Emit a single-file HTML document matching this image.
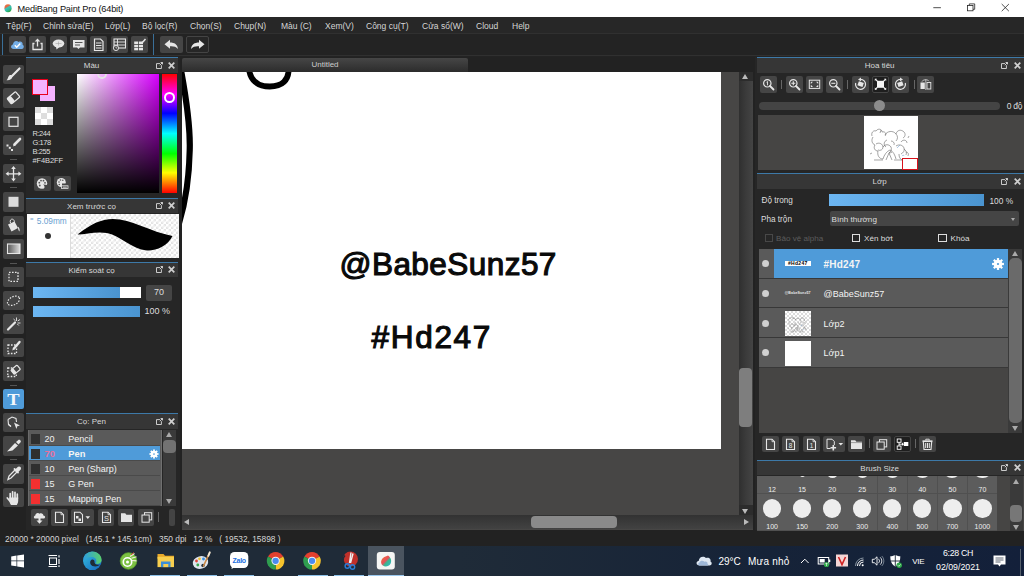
<!DOCTYPE html><html><head><meta charset="utf-8"><title>MediBang Paint Pro</title><style>
*{box-sizing:border-box;margin:0;padding:0}
html,body{width:1024px;height:576px;overflow:hidden;background:#222;}
body{position:relative;font-family:"Liberation Sans",sans-serif;font-size:8.5px;color:#ddd;line-height:1;}
.a{position:absolute;}
.t{position:absolute;white-space:nowrap;}
.btn{position:absolute;background:#454545;border-radius:2px;}
.hdr{position:absolute;background:#363636;border-top:1px solid #3d79a8;height:16px;}
.hdr .ti{position:absolute;left:0;right:0;top:4px;text-align:center;color:#d8d8d8;font-size:8px;}
svg{position:absolute;overflow:visible;}
</style></head><body>
<div class="a" style="left:0;top:0;width:1024px;height:17px;background:#fff"></div>
<svg style="left:3.500px;top:3.500px" width="8" height="8.500" viewBox="0 0 8 8.500"><defs><linearGradient id="tg" x1="0.150" y1="0" x2="0.700" y2="1"><stop offset="0" stop-color="#f07a3a"/><stop offset="0.300" stop-color="#e0684a"/><stop offset="0.450" stop-color="#3cc4b8"/><stop offset="0.700" stop-color="#2fb89a"/><stop offset="1" stop-color="#2a9e30"/></linearGradient></defs><ellipse cx="4" cy="4.300" rx="3.600" ry="4" fill="url(#tg)"/></svg>
<div class="t" style="left:17.600px;top:4.500px;font-size:9.200px;letter-spacing:-0.180px;color:#111;">MediBang Paint Pro (64bit)</div>
<svg style="left:0;top:0" width="1024" height="17" viewBox="0 0 1024 17" fill="none" stroke="#222" stroke-width="0.800"><path d="M933.300 7.700h7.600"/><rect x="967.600" y="5.400" width="5.400" height="5.400"/><path d="M969.300 5.400v-1.500h5.400v5.400h-1.700"/><path d="M1001.700 4l7.200 7.200M1008.900 4l-7.200 7.200"/></svg>
<div class="a" style="left:0;top:17px;width:1024px;height:16px;background:#272727"></div>
<div class="t" style="left:6px;top:21.500px;font-size:8.500px;color:#d6d6d6">Tệp(F)</div>
<div class="t" style="left:43px;top:21.500px;font-size:8.500px;color:#d6d6d6">Chỉnh sửa(E)</div>
<div class="t" style="left:105px;top:21.500px;font-size:8.500px;color:#d6d6d6">Lớp(L)</div>
<div class="t" style="left:142px;top:21.500px;font-size:8.500px;color:#d6d6d6">Bộ lọc(R)</div>
<div class="t" style="left:190px;top:21.500px;font-size:8.500px;color:#d6d6d6">Chọn(S)</div>
<div class="t" style="left:234px;top:21.500px;font-size:8.500px;color:#d6d6d6">Chụp(N)</div>
<div class="t" style="left:281px;top:21.500px;font-size:8.500px;color:#d6d6d6">Màu (C)</div>
<div class="t" style="left:325px;top:21.500px;font-size:8.500px;color:#d6d6d6">Xem(V)</div>
<div class="t" style="left:366px;top:21.500px;font-size:8.500px;color:#d6d6d6">Công cụ(T)</div>
<div class="t" style="left:422px;top:21.500px;font-size:8.500px;color:#d6d6d6">Cửa sổ(W)</div>
<div class="t" style="left:476px;top:21.500px;font-size:8.500px;color:#d6d6d6">Cloud</div>
<div class="t" style="left:512px;top:21.500px;font-size:8.500px;color:#d6d6d6">Help</div>
<div class="a" style="left:0;top:33px;width:1024px;height:24px;background:#232323;border-top:1px solid #303030"></div>
<div class="a" style="left:2px;top:34px;width:1px;height:21px;background:#3a6f98"></div>
<div class="a" style="left:153px;top:34px;width:1px;height:21px;background:#3a6f98"></div>
<div class="btn" style="left:9.0px;top:36px;width:17px;height:16.5px"></div>
<svg style="left:9.0px;top:36px" width="17" height="17" viewBox="0 0 17 17" ><path d="M4.500 13C1.500 13 1.200 9.200 4 8.600C3.800 5.500 7.500 3.600 9.600 6C11.800 4.600 14.200 6.500 13.600 8.800C15.600 9.500 15 13 12.800 13Z" fill="#74aee6"/><path d="M5.800 9.300l1.900 1.900l3.600-3.800" fill="none" stroke="#fff" stroke-width="1.400"/></svg>
<div class="btn" style="left:29.3px;top:36px;width:17px;height:16.5px"></div>
<svg style="left:29.3px;top:36px" width="17" height="17" viewBox="0 0 17 17" ><path d="M5.500 7.500H4v6h9v-6h-1.500" fill="none" stroke="#e6e6e6" stroke-width="1.300"/><path d="M8.500 10.500V4" stroke="#e6e6e6" stroke-width="1.300"/><path d="M8.500 2.500l2.800 3h-5.600z" fill="#e6e6e6"/></svg>
<div class="btn" style="left:49.6px;top:36px;width:17px;height:16.5px"></div>
<svg style="left:49.6px;top:36px" width="17" height="17" viewBox="0 0 17 17" ><ellipse cx="8.500" cy="7.500" rx="5.800" ry="4" fill="#e6e6e6"/><path d="M6 10.500l.5 3 3-2.500z" fill="#e6e6e6"/><path d="M5.500 7.500h6M8.500 5.500v4" stroke="#999" stroke-width="0.500"/></svg>
<div class="btn" style="left:69.9px;top:36px;width:17px;height:16.5px"></div>
<svg style="left:69.9px;top:36px" width="17" height="17" viewBox="0 0 17 17" ><path d="M3 4h11.500v7.500H10L8.500 13L7 11.500H3Z" fill="#e6e6e6"/><path d="M5 6.500h7.500M5 9h5" stroke="#555" stroke-width="1"/></svg>
<div class="btn" style="left:90.2px;top:36px;width:17px;height:16.5px"></div>
<svg style="left:90.2px;top:36px" width="17" height="17" viewBox="0 0 17 17" ><path d="M4.500 3h6l2.500 2.500v9h-8.500z" fill="none" stroke="#e6e6e6" stroke-width="1.200"/><path d="M6 7h5.500M6 9.500h5.500M6 12h5.500" stroke="#e6e6e6" stroke-width="1.100"/></svg>
<div class="btn" style="left:110.5px;top:36px;width:17px;height:16.5px"></div>
<svg style="left:110.5px;top:36px" width="17" height="17" viewBox="0 0 17 17" ><rect x="3" y="3" width="11.500" height="9" fill="none" stroke="#e6e6e6" stroke-width="1.100"/><path d="M3 6h11.500M3 9h11.500M6.500 3v9" stroke="#e6e6e6" stroke-width="0.900"/><circle cx="5" cy="12" r="2.600" fill="#454545" stroke="#e6e6e6" stroke-width="0.900"/><path d="M5 10.500V12h1.200" stroke="#e6e6e6" stroke-width="0.700" fill="none"/></svg>
<div class="btn" style="left:130.8px;top:36px;width:17px;height:16.5px"></div>
<svg style="left:130.8px;top:36px" width="17" height="17" viewBox="0 0 17 17" ><rect x="3.200" y="5.500" width="4" height="2.500" fill="#e6e6e6"/><rect x="8" y="5.500" width="4" height="2.500" fill="#e6e6e6"/><rect x="3.200" y="8.800" width="4" height="2.500" fill="#e6e6e6"/><rect x="8" y="8.800" width="4" height="2.500" fill="#e6e6e6"/><rect x="3.200" y="12" width="4" height="2.300" fill="#e6e6e6"/><rect x="8" y="12" width="4" height="2.300" fill="#e6e6e6"/><path d="M14.500 3L10.500 7.500" stroke="#e6e6e6" stroke-width="1.500"/></svg>
<div class="btn" style="left:160px;top:36px;width:23px;height:17px"></div>
<svg style="left:160px;top:36px" width="23" height="17" viewBox="0 0 23 17" ><path d="M4.500 8.200L10 3.800V6.500C14.500 6.500 17.500 8.500 18 13C16 10.500 13.500 10 10 10.200V12.800Z" fill="#e6e6e6"/></svg>
<div class="btn" style="left:186px;top:36px;width:23px;height:17px;background:#262626;border:1px solid #444"></div>
<svg style="left:186px;top:36px" width="23" height="17" viewBox="0 0 23 17" ><path d="M18.500 8.200L13 3.800V6.500C8.500 6.500 5.500 8.500 5 13C7 10.500 9.500 10 13 10.200V12.800Z" fill="#e6e6e6"/></svg>
<div class="a" style="left:0;top:55px;width:1024px;height:1px;background:#303030"></div>
<div class="a" style="left:0;top:57px;width:26px;height:473px;background:#222"></div>
<div class="btn" style="left:3px;top:64.5px;width:20.500px;height:19.500px;background:#454545"></div>
<svg style="left:3px;top:64.5px" width="21" height="19.5" viewBox="0 0 21 19.5" ><path d="M16.5 3.5L9 11" stroke="#e6e6e6" stroke-width="2.2" stroke-linecap="round" fill="none"/><path d="M9.5 11.5C9 14.5 6.500 15.500 3.500 15.200C5 14 4.800 12 6.500 10.200C7.500 9.500 9 10.200 9.500 11.500Z" fill="#e6e6e6"/></svg>
<div class="btn" style="left:3px;top:88px;width:20.500px;height:19.500px;background:#454545"></div>
<svg style="left:3px;top:88px" width="21" height="19.5" viewBox="0 0 21 19.5" ><g transform="rotate(-40 10.5 9.8)"><rect x="5" y="6.300" width="11" height="7" rx="1" fill="none" stroke="#e6e6e6" stroke-width="1.300"/><rect x="5" y="6.300" width="4.500" height="7" rx="1" fill="#e6e6e6"/></g></svg>
<div class="btn" style="left:3px;top:111.5px;width:20.500px;height:19.500px;background:#454545"></div>
<svg style="left:3px;top:111.5px" width="21" height="19.5" viewBox="0 0 21 19.5" ><rect x="6" y="5.300" width="9" height="9" fill="none" stroke="#e6e6e6" stroke-width="1.200"/></svg>
<div class="btn" style="left:3px;top:135px;width:20.500px;height:19.500px;background:#454545"></div>
<svg style="left:3px;top:135px" width="21" height="19.5" viewBox="0 0 21 19.5" ><path d="M17 4L11.500 9.500" stroke="#e6e6e6" stroke-width="2.600" stroke-linecap="round"/><path d="M11.300 8.300l1.800 1.800-3 1.300z" fill="#e6e6e6"/><rect x="3.500" y="9.500" width="2" height="2" fill="#e6e6e6"/><rect x="5.800" y="11.800" width="2" height="2" fill="#e6e6e6"/><rect x="8" y="14" width="2" height="2" fill="#e6e6e6"/></svg>
<div class="btn" style="left:3px;top:163.5px;width:20.500px;height:19.500px;background:#454545"></div>
<svg style="left:3px;top:163.5px" width="21" height="19.5" viewBox="0 0 21 19.5" ><path d="M10.500 3.500V16M4 9.800H17" stroke="#e6e6e6" stroke-width="1.300" fill="none"/><path d="M10.500 2l2.300 3h-4.600zM10.500 17.600l2.300-3h-4.600zM2.600 9.800l3-2.300v4.600zM18.400 9.800l-3-2.300v4.600z" fill="#e6e6e6"/></svg>
<div class="btn" style="left:3px;top:192px;width:20.500px;height:19.500px;background:#454545"></div>
<svg style="left:3px;top:192px" width="21" height="19.5" viewBox="0 0 21 19.5" ><rect x="5.500" y="4.800" width="10" height="10" fill="#dcdcdc"/></svg>
<div class="btn" style="left:3px;top:215.5px;width:20.500px;height:19.500px;background:#454545"></div>
<svg style="left:3px;top:215.5px" width="21" height="19.5" viewBox="0 0 21 19.5" ><path d="M5 8.500L11.500 5.500L15 12L8.500 15.500Z" fill="#e6e6e6"/><path d="M7.500 7C6.500 4.500 8 2.800 9.500 3.200C11 3.600 11.500 5 11.300 6.500" fill="none" stroke="#e6e6e6" stroke-width="1"/><path d="M14.800 10.500C16.500 11.500 17 13.500 16.500 15.500C15.500 15 15 13 14.800 10.500Z" fill="#e6e6e6"/></svg>
<div class="btn" style="left:3px;top:239px;width:20.500px;height:19.500px;background:#454545"></div>
<svg style="left:3px;top:239px" width="21" height="19.5" viewBox="0 0 21 19.5" ><defs><linearGradient id="gg" x1="0" y1="0" x2="1" y2="0"><stop offset="0" stop-color="#555"/><stop offset="1" stop-color="#ddd"/></linearGradient></defs><rect x="4.500" y="5" width="12.500" height="9.500" fill="url(#gg)" stroke="#e6e6e6" stroke-width="1.100"/></svg>
<div class="btn" style="left:3px;top:267px;width:20.500px;height:19.500px;background:#454545"></div>
<svg style="left:3px;top:267px" width="21" height="19.5" viewBox="0 0 21 19.5" ><rect x="6" y="5.300" width="9" height="9" fill="none" stroke="#e6e6e6" stroke-width="1.300" stroke-dasharray="1.600 1.400"/></svg>
<div class="btn" style="left:3px;top:290.5px;width:20.500px;height:19.500px;background:#454545"></div>
<svg style="left:3px;top:290.5px" width="21" height="19.5" viewBox="0 0 21 19.5" ><ellipse cx="10.500" cy="9.800" rx="6.500" ry="4" transform="rotate(-28 10.5 9.8)" fill="none" stroke="#e6e6e6" stroke-width="1.200" stroke-dasharray="1.500 1.300"/></svg>
<div class="btn" style="left:3px;top:314px;width:20.500px;height:19.500px;background:#454545"></div>
<svg style="left:3px;top:314px" width="21" height="19.5" viewBox="0 0 21 19.5" ><path d="M5 15.500L12 8.500" stroke="#e6e6e6" stroke-width="2.200" stroke-linecap="round"/><path d="M13.500 3.500v3.500M10.500 5l2 1.800M17 5.500l-2.300 1.500M17.500 9h-3M15.800 11.500l-1.500-1.500" stroke="#e6e6e6" stroke-width="0.900"/></svg>
<div class="btn" style="left:3px;top:337.5px;width:20.500px;height:19.500px;background:#454545"></div>
<svg style="left:3px;top:337.5px" width="21" height="19.5" viewBox="0 0 21 19.5" ><rect x="5" y="7" width="8.500" height="8.500" fill="none" stroke="#e6e6e6" stroke-width="1.300" stroke-dasharray="1.600 1.400"/><path d="M16.500 4L11 10.500" stroke="#e6e6e6" stroke-width="2.400" stroke-linecap="round"/><path d="M10.200 9.600l1.800 1.500-2.800 1.500z" fill="#e6e6e6"/></svg>
<div class="btn" style="left:3px;top:361px;width:20.500px;height:19.500px;background:#454545"></div>
<svg style="left:3px;top:361px" width="21" height="19.5" viewBox="0 0 21 19.5" ><rect x="4.800" y="7" width="8.500" height="8.500" fill="none" stroke="#e6e6e6" stroke-width="1.300" stroke-dasharray="1.600 1.400"/><g transform="rotate(-40 12.500 8.500)"><rect x="8.500" y="6" width="8" height="5.500" rx="0.800" fill="#454545" stroke="#e6e6e6" stroke-width="1.200"/><rect x="8.500" y="6" width="3" height="5.500" fill="#e6e6e6"/></g></svg>
<div class="btn" style="left:3px;top:389px;width:20.500px;height:19.500px;background:#4f9bd9"></div>
<svg style="left:3px;top:389px" width="21" height="19.5" viewBox="0 0 21 19.5" ><text transform="translate(10.300 15.800) scale(1.120 1)" text-anchor="middle" font-family="Liberation Serif, serif" font-weight="bold" font-size="16.500" fill="#f4f8fc">T</text></svg>
<div class="btn" style="left:3px;top:412.5px;width:20.500px;height:19.500px;background:#454545"></div>
<svg style="left:3px;top:412.5px" width="21" height="19.5" viewBox="0 0 21 19.5" ><path d="M5 6.500L9 4L13 5.500L13.500 9M8 13.500L5.500 11.500Z" fill="none" stroke="#e6e6e6" stroke-width="1.100"/><path d="M5 6.500L5.500 11.500L8 13.500" fill="none" stroke="#e6e6e6" stroke-width="1.100"/><path d="M11 9.500l6 3-2.700.8-.9 2.700z" fill="#e6e6e6"/></svg>
<div class="btn" style="left:3px;top:436px;width:20.500px;height:19.500px;background:#454545"></div>
<svg style="left:3px;top:436px" width="21" height="19.5" viewBox="0 0 21 19.5" ><path d="M4 15.500L12 7L15 9.500L9.500 14.500Z" fill="#e6e6e6"/><path d="M13 6L16 3.500C17.500 4 18 5 17.800 6L15.500 8.500Z" fill="#e6e6e6"/></svg>
<div class="btn" style="left:3px;top:464px;width:20.500px;height:19.500px;background:#454545"></div>
<svg style="left:3px;top:464px" width="21" height="19.5" viewBox="0 0 21 19.5" ><path d="M5 15.500L6 12L12 6L14 8L8 14Z" fill="none" stroke="#e6e6e6" stroke-width="1.300"/><path d="M11.500 5L15 8.500M13 6L15.500 3.500C16.500 3 17.500 4 17 5L14.500 7.500" stroke="#e6e6e6" stroke-width="1.800" fill="#e6e6e6" stroke-linecap="round"/></svg>
<div class="btn" style="left:3px;top:487.5px;width:20.500px;height:19.500px;background:#454545"></div>
<svg style="left:3px;top:487.5px" width="21" height="19.5" viewBox="0 0 21 19.5" ><path d="M7.200 10.500V5.500M9.600 10V3.800M12 10V4.300M14.300 10.500V6.200M6.800 13L4.300 10" stroke="#e6e6e6" stroke-width="1.700" stroke-linecap="round" fill="none"/><path d="M6.300 9.500H15.200V12.500C15.200 14.500 14.500 15.800 13.800 17H8C6.800 15.500 6.300 13.500 6.300 12Z" fill="#e6e6e6"/></svg>
<div class="a" style="left:10px;top:159px;width:7px;height:1px;background:#555"></div>
<div class="a" style="left:10px;top:187px;width:7px;height:1px;background:#555"></div>
<div class="a" style="left:10px;top:262.5px;width:7px;height:1px;background:#555"></div>
<div class="a" style="left:10px;top:384.5px;width:7px;height:1px;background:#555"></div>
<div class="a" style="left:10px;top:459px;width:7px;height:1px;background:#555"></div>
<div class="a" style="left:26px;top:57px;width:154px;height:473px;background:#262626"></div>
<div class="hdr" style="left:26px;top:57px;width:152px;height:15.5px"><div class="ti" style="right:21px">Màu</div><svg style="right:15.2px;top:3.600px" width="7" height="7" viewBox="0 0 7 7" fill="none" stroke="#ddd" stroke-width="0.9"><path d="M4 1.600H.5v4.900h4.900v-3.300"/><path d="M3.800 3.200l2.700-2.700M4.600 .5h1.900v1.900"/></svg><svg style="right:2.8px;top:3.800px" width="7" height="7" viewBox="0 0 7 7" fill="none" stroke="#cfcfcf" stroke-width="1.700"><path d="M.7 .7l5.600 5.600M6.300 .7L.7 6.300"/></svg></div>
<div class="a" style="left:77px;top:74px;width:82px;height:119px;background:linear-gradient(to bottom,rgba(0,0,0,0),#000),linear-gradient(to right,#fff,#d800ff)"></div>
<div class="a" style="left:162px;top:74px;width:15px;height:119px;background:linear-gradient(to bottom,#f00 0%,#f0f 17%,#00f 33%,#0ff 50%,#0f0 67%,#ff0 83%,#f00 100%)"></div>
<div class="a" style="left:164px;top:92px;width:11px;height:11px;border:2px solid #fff;border-radius:50%"></div>
<div class="a" style="left:97.300px;top:69.300px;width:9.600px;height:9.600px;border:2px solid #e4e4e4;border-radius:50%;clip-path:inset(4.700px 0 0 0)"></div>
<div class="a" style="left:39.5px;top:86px;width:15px;height:15px;background:#f4b2ff"></div>
<div class="a" style="left:32px;top:79px;width:16px;height:15.5px;background:#f4b2ff;border:1.3px solid #e8001c"></div>
<div class="a" style="left:34.5px;top:107px;width:18px;height:17.5px;background:#fff"></div>
<div class="a" style="left:34.5px;top:107px;width:6px;height:6px;background:#ddd"></div><div class="a" style="left:46.5px;top:107px;width:6px;height:6px;background:#ddd"></div><div class="a" style="left:40.5px;top:113px;width:6px;height:6px;background:#ddd"></div><div class="a" style="left:34.5px;top:119px;width:6px;height:5.5px;background:#ddd"></div><div class="a" style="left:46.5px;top:119px;width:6px;height:5.5px;background:#ddd"></div>
<div class="t" style="left:32.5px;top:130px;font-size:7.500px;letter-spacing:-0.45px;color:#ddd">R:244</div>
<div class="t" style="left:32.5px;top:139px;font-size:7.500px;letter-spacing:-0.45px;color:#ddd">G:178</div>
<div class="t" style="left:32.5px;top:148px;font-size:7.500px;letter-spacing:-0.45px;color:#ddd">B:255</div>
<div class="t" style="left:32.5px;top:157px;font-size:7.500px;letter-spacing:-0.1px;color:#ddd">#F4B2FF</div>
<div class="btn" style="left:34px;top:176px;width:16.5px;height:15px"></div>
<svg style="left:34px;top:176px" width="17" height="15" viewBox="0 0 17 15" ><circle cx="8" cy="7.500" r="5.200" fill="#e6e6e6"/><circle cx="5.300" cy="6.700" r="0.900" fill="#555"/><circle cx="7" cy="4.600" r="0.900" fill="#555"/><circle cx="9.500" cy="4.700" r="0.900" fill="#555"/><circle cx="11" cy="6.800" r="0.900" fill="#555"/><circle cx="5.800" cy="9.500" r="0.900" fill="#555"/><path d="M9 8.500C10.500 9 11 11 10 13L12.500 12.500L13.500 9Z" fill="#454545"/></svg>
<div class="btn" style="left:54px;top:176px;width:17px;height:15px"></div>
<svg style="left:54px;top:176px" width="17" height="15" viewBox="0 0 17 15" ><circle cx="7.300" cy="6.500" r="4.500" fill="#e6e6e6"/><circle cx="5" cy="6" r="0.800" fill="#555"/><circle cx="6.500" cy="4" r="0.800" fill="#555"/><circle cx="8.800" cy="4.200" r="0.800" fill="#555"/><circle cx="5.300" cy="8.500" r="0.800" fill="#555"/><path d="M8 7.500L13 7.500L13 12L8 12Z" fill="#454545"/><rect x="7.500" y="9.800" width="6.500" height="2.700" fill="#454545" stroke="#e6e6e6" stroke-width="0.800"/><path d="M8.800 11.200h4" stroke="#e6e6e6" stroke-width="0.800"/></svg>
<div class="hdr" style="left:26px;top:197.5px;width:152px;height:15.5px"><div class="ti" style="right:21px">Xem trước cọ</div><svg style="right:15.2px;top:3.600px" width="7" height="7" viewBox="0 0 7 7" fill="none" stroke="#ddd" stroke-width="0.9"><path d="M4 1.600H.5v4.900h4.900v-3.300"/><path d="M3.800 3.200l2.700-2.700M4.600 .5h1.900v1.900"/></svg><svg style="right:2.8px;top:3.800px" width="7" height="7" viewBox="0 0 7 7" fill="none" stroke="#cfcfcf" stroke-width="1.700"><path d="M.7 .7l5.600 5.600M6.300 .7L.7 6.300"/></svg></div>
<div class="a" style="left:26.500px;top:214px;width:152.300px;height:43.800px;background:#fff"></div>
<div class="a" style="left:70.300px;top:214px;width:108.500px;height:43.800px;background-color:#fff;background-image:linear-gradient(45deg,#e4e4e4 25%,transparent 25%,transparent 75%,#e4e4e4 75%),linear-gradient(45deg,#e4e4e4 25%,transparent 25%,transparent 75%,#e4e4e4 75%);background-size:5px 5px;background-position:0 0,2.5px 2.5px;border-left:1px solid #ddd"></div>
<div class="t" style="left:30px;top:215.500px;font-size:6px;color:#6aa0d0">=</div>
<div class="t" style="left:36.800px;top:216.800px;font-size:8.300px;color:#6aa0d0">5.09mm</div>
<div class="a" style="left:45px;top:233px;width:6px;height:6px;border-radius:50%;background:#333"></div>
<svg style="left:71px;top:214px" width="108" height="44" viewBox="0 0 108 44"><path d="M6.500 20.500C20 10 30 5 42 5C60 5 80 18 101.500 22C97 32 85 37 76 36.500C60 35 50 22 36 19C25 17 15 20.500 6.500 20.500Z" fill="#000"/></svg>
<div class="hdr" style="left:26px;top:261.5px;width:152px;height:15.5px"><div class="ti" style="right:21px">Kiểm soát cọ</div><svg style="right:15.2px;top:3.600px" width="7" height="7" viewBox="0 0 7 7" fill="none" stroke="#ddd" stroke-width="0.9"><path d="M4 1.600H.5v4.900h4.900v-3.300"/><path d="M3.800 3.200l2.700-2.700M4.600 .5h1.900v1.900"/></svg><svg style="right:2.8px;top:3.800px" width="7" height="7" viewBox="0 0 7 7" fill="none" stroke="#cfcfcf" stroke-width="1.700"><path d="M.7 .7l5.600 5.600M6.300 .7L.7 6.300"/></svg></div>
<div class="a" style="left:33px;top:287px;width:108px;height:11px;background:#fff"></div>
<div class="a" style="left:33px;top:287px;width:87px;height:11px;background:linear-gradient(to right,#6cb6f2,#4a94d0)"></div>
<div class="a" style="left:146px;top:284.5px;width:26px;height:16px;background:#454545;border-radius:2px"></div>
<div class="t" style="left:146px;top:288px;width:26px;text-align:center;font-size:9px;color:#ddd">70</div>
<div class="a" style="left:33px;top:305.5px;width:106.5px;height:11.5px;background:linear-gradient(to right,#6cb6f2,#4a94d0)"></div>
<div class="t" style="left:144.5px;top:307px;font-size:9px;color:#ddd">100 %</div>
<div class="hdr" style="left:26px;top:413px;width:152px;height:15.5px"><div class="ti" style="right:21px">Cọ: Pen</div><svg style="right:15.2px;top:3.600px" width="7" height="7" viewBox="0 0 7 7" fill="none" stroke="#ddd" stroke-width="0.9"><path d="M4 1.600H.5v4.900h4.900v-3.300"/><path d="M3.800 3.200l2.700-2.700M4.600 .5h1.900v1.900"/></svg><svg style="right:2.8px;top:3.800px" width="7" height="7" viewBox="0 0 7 7" fill="none" stroke="#cfcfcf" stroke-width="1.700"><path d="M.7 .7l5.600 5.600M6.300 .7L.7 6.300"/></svg></div>
<div class="a" style="left:28px;top:430px;width:133.500px;height:76px;background:#5a5a5a;border-right:1px solid #707070;border-left:1px solid #6a6a6a"></div>
<div class="a" style="left:28.800px;top:431px;width:131.700px;height:14.500px;background:#5a5a5a;border-bottom:1px solid #4a4a4a"></div>
<div class="a" style="left:30.5px;top:433.5px;width:9.5px;height:10px;background:#2f2f2f"></div>
<div class="t" style="left:44.5px;top:434.6px;font-size:9px;color:#f0f0f0;">20</div>
<div class="t" style="left:68.3px;top:434.6px;font-size:9px;color:#f4f4f4;">Pencil</div>
<div class="a" style="left:28.800px;top:446px;width:131.700px;height:14.500px;background:#4f9bd9;border-bottom:1px solid #4a4a4a"></div>
<div class="a" style="left:30.5px;top:448.5px;width:9.5px;height:10px;background:#2f2f2f"></div>
<div class="t" style="left:44.5px;top:449.6px;font-size:9.3px;color:#e8709c;font-weight:bold;">70</div>
<div class="t" style="left:68.3px;top:449.6px;font-size:9.3px;color:#f4f4f4;font-weight:bold;">Pen</div>
<div class="a" style="left:28.800px;top:461px;width:131.700px;height:14.500px;background:#5a5a5a;border-bottom:1px solid #4a4a4a"></div>
<div class="a" style="left:30.5px;top:463.5px;width:9.5px;height:10px;background:#2f2f2f"></div>
<div class="t" style="left:44.5px;top:464.6px;font-size:9px;color:#f0f0f0;">10</div>
<div class="t" style="left:68.3px;top:464.6px;font-size:9px;color:#f4f4f4;">Pen (Sharp)</div>
<div class="a" style="left:28.800px;top:476px;width:131.700px;height:14.500px;background:#5a5a5a;border-bottom:1px solid #4a4a4a"></div>
<div class="a" style="left:30.5px;top:478.5px;width:9.5px;height:10px;background:#f23030"></div>
<div class="t" style="left:44.5px;top:479.6px;font-size:9px;color:#f0f0f0;">15</div>
<div class="t" style="left:68.3px;top:479.6px;font-size:9px;color:#f4f4f4;">G Pen</div>
<div class="a" style="left:28.800px;top:491px;width:131.700px;height:14.500px;background:#5a5a5a;border-bottom:1px solid #4a4a4a"></div>
<div class="a" style="left:30.5px;top:493.5px;width:9.5px;height:10px;background:#f23030"></div>
<div class="t" style="left:44.5px;top:494.6px;font-size:9px;color:#f0f0f0;">15</div>
<div class="t" style="left:68.3px;top:494.6px;font-size:9px;color:#f4f4f4;">Mapping Pen</div>
<div class="a" style="left:163px;top:430px;width:13px;height:76px;background:#3a3a3a"></div>
<div class="a" style="left:163.200px;top:439.500px;width:13.100px;height:13px;background:#727272;border-radius:4px"></div>
<div class="a" style="left:166px;top:432px;border:3.5px solid transparent;border-bottom:5px solid #aaa;border-top:0"></div>
<div class="a" style="left:166px;top:499px;border:3.5px solid transparent;border-top:5px solid #aaa;border-bottom:0"></div>
<div class="btn" style="left:31px;top:509px;width:16.5px;height:16.5px"></div>
<svg style="left:31px;top:509px" width="16.5" height="16.5" viewBox="0 0 16.5 16.5" ><path d="M4.500 9.500C2.500 9.500 2.300 6.800 4.300 6.400C4.300 4.200 7 3.200 8.600 4.700C10.200 3.600 12.500 4.700 12.300 6.500C14.700 6.700 14.700 9.500 12.500 9.500Z" fill="#e6e6e6"/><path d="M8.500 8v4" stroke="#e6e6e6" stroke-width="2"/><path d="M5.500 11.500h6l-3 3.300z" fill="#e6e6e6"/></svg>
<div class="btn" style="left:51px;top:509px;width:16.5px;height:16.5px"></div>
<svg style="left:51px;top:509px" width="16.5" height="16.5" viewBox="0 0 16.5 16.5" ><path d="M4.5 3.200h5.500l2.500 2.500v7.800h-8z" fill="none" stroke="#e6e6e6" stroke-width="1.100"/><path d="M10.0 3.200v2.500h2.500" fill="none" stroke="#e6e6e6" stroke-width="0.800"/></svg>
<div class="btn" style="left:71px;top:509px;width:22.5px;height:16.5px"></div>
<svg style="left:71px;top:509px" width="22.5" height="16.5" viewBox="0 0 22.5 16.5" ><path d="M3.500 3.200h5.500l2.500 2.500v7.800h-8z" fill="none" stroke="#e6e6e6" stroke-width="1.100"/><rect x="5" y="7" width="2.500" height="2.500" fill="#e6e6e6"/><rect x="7.500" y="9.500" width="2.500" height="2.500" fill="#e6e6e6"/><path d="M14.500 7.300l2.300 2.600l2.300-2.600z" fill="#e6e6e6"/></svg>
<div class="btn" style="left:97.5px;top:509px;width:16.5px;height:16.5px"></div>
<svg style="left:97.5px;top:509px" width="16.5" height="16.5" viewBox="0 0 16.5 16.5" ><path d="M4.5 3.200h5.500l2.500 2.500v7.800h-8z" fill="none" stroke="#e6e6e6" stroke-width="1.100"/><path d="M10.0 3.200v2.500h2.500" fill="none" stroke="#e6e6e6" stroke-width="0.800"/><text x="8.500" y="12.300" font-size="7.500" font-family="Liberation Sans, sans-serif" fill="#e6e6e6" text-anchor="middle">S</text></svg>
<div class="btn" style="left:117.5px;top:509px;width:16.5px;height:16.5px"></div>
<svg style="left:117.5px;top:509px" width="16.5" height="16.5" viewBox="0 0 16.5 16.5" ><path d="M3 4.200h4.200l1.200 1.500h5.600v7.300h-11z" fill="#e6e6e6"/></svg>
<div class="btn" style="left:137.5px;top:509px;width:16.5px;height:16.5px"></div>
<svg style="left:137.5px;top:509px" width="16.5" height="16.5" viewBox="0 0 16.5 16.5" ><rect x="6.500" y="3.700" width="7.200" height="7.200" fill="none" stroke="#e6e6e6" stroke-width="1"/><rect x="4" y="6" width="7.200" height="7.200" fill="#454545" stroke="#e6e6e6" stroke-width="1"/></svg>
<div class="a" style="left:158px;top:512px;width:1px;height:10px;background:#666"></div>
<div class="a" style="left:168.5px;top:509px;width:6.5px;height:17px;background:#444;border-radius:2px"></div>
<svg style="left:147.4px;top:446.6px" width="14" height="14" viewBox="0 0 14 14" ><circle cx="7" cy="7" r="3.30" fill="#fff"/><rect x="6.14" y="2.45" width="1.72" height="2.31" fill="#fff" transform="rotate(0 7 7)"/><rect x="6.14" y="2.45" width="1.72" height="2.31" fill="#fff" transform="rotate(45 7 7)"/><rect x="6.14" y="2.45" width="1.72" height="2.31" fill="#fff" transform="rotate(90 7 7)"/><rect x="6.14" y="2.45" width="1.72" height="2.31" fill="#fff" transform="rotate(135 7 7)"/><rect x="6.14" y="2.45" width="1.72" height="2.31" fill="#fff" transform="rotate(180 7 7)"/><rect x="6.14" y="2.45" width="1.72" height="2.31" fill="#fff" transform="rotate(225 7 7)"/><rect x="6.14" y="2.45" width="1.72" height="2.31" fill="#fff" transform="rotate(270 7 7)"/><rect x="6.14" y="2.45" width="1.72" height="2.31" fill="#fff" transform="rotate(315 7 7)"/><circle cx="7" cy="7" r="0.86" fill="#4f9bd9"/></svg>
<div class="a" style="left:180px;top:57px;width:577px;height:473px;background:#222"></div><div class="a" style="left:181.500px;top:57px;width:571.200px;height:473px;background:#474645"></div>
<div class="a" style="left:180px;top:57px;width:577px;height:14.5px;background:#222"></div>
<div class="a" style="left:182px;top:57.5px;width:286px;height:14px;background:linear-gradient(#464646,#2c2c2c);border-radius:2px 2px 0 0"></div>
<div class="t" style="left:182px;top:60.5px;width:286px;text-align:center;font-size:8px;color:#ccc">Untitled</div>
<div class="a" style="left:182px;top:71.500px;width:539px;height:377.400px;background:#fff;overflow:hidden" id="cv"></div>
<svg style="left:182.200px;top:71.500px;overflow:hidden" width="200" height="200" viewBox="182.200 71.500 200 200" fill="none" stroke="#000"><path d="M249 67C250 80 258 86 270 86C282 86 289.500 80 288.800 67" stroke-width="5.800"/><path d="M180.500 66C186 95 190.800 125 189.900 150C189.300 178 186.500 200 178.500 225" stroke-width="6.200"/></svg>
<div class="t" style="left:339.5px;top:249px;font-size:31.5px;font-weight:normal;color:#0a0a0a;letter-spacing:0.45px;-webkit-text-stroke:1.15px #0a0a0a">@BabeSunz57</div>
<div class="t" style="left:371.5px;top:322px;font-size:31.5px;font-weight:normal;color:#0a0a0a;letter-spacing:1.7px;-webkit-text-stroke:1.15px #0a0a0a">#Hd247</div>
<div class="a" style="left:738.600px;top:71.500px;width:14.100px;height:443px;background:linear-gradient(to right,#2f2f2f,#3b3b3b 50%,#444)"></div><div class="a" style="left:738.600px;top:71.500px;width:14.100px;height:9.200px;background:#2c2c2c"></div><div class="a" style="left:738.600px;top:504.500px;width:14.100px;height:10px;background:#2c2c2c"></div>
<div class="a" style="left:739.200px;top:368px;width:13.300px;height:58.500px;background:#7e7e7e;border-radius:4px"></div>
<div class="a" style="left:742.100px;top:73.600px;border:3.5px solid transparent;border-bottom:5px solid #bbb;border-top:0"></div>
<div class="a" style="left:742.100px;top:508.500px;border:3.5px solid transparent;border-top:5px solid #bbb;border-bottom:0"></div>
<div class="a" style="left:182px;top:515px;width:570.700px;height:14px;background:linear-gradient(#323232,#424242)"></div>
<div class="a" style="left:531px;top:516px;width:86px;height:12px;background:#8a8a8a;border-radius:4px"></div>
<div class="a" style="left:184px;top:518.500px;border:3.5px solid transparent;border-right:5px solid #bbb;border-left:0"></div>
<div class="a" style="left:744px;top:518.500px;border:3.5px solid transparent;border-left:5px solid #bbb;border-right:0"></div>
<div class="a" style="left:755px;top:57px;width:269px;height:473px;background:#262626"></div>
<div class="hdr" style="left:757px;top:57px;width:267px;height:15.5px"><div class="ti" style="right:21.7px">Hoa tiêu</div><svg style="right:15.899999999999999px;top:3.600px" width="7" height="7" viewBox="0 0 7 7" fill="none" stroke="#ddd" stroke-width="0.9"><path d="M4 1.600H.5v4.900h4.900v-3.300"/><path d="M3.800 3.200l2.700-2.700M4.600 .5h1.900v1.900"/></svg><svg style="right:3.5px;top:3.800px" width="7" height="7" viewBox="0 0 7 7" fill="none" stroke="#cfcfcf" stroke-width="1.700"><path d="M.7 .7l5.600 5.600M6.300 .7L.7 6.300"/></svg></div>
<div class="btn" style="left:760px;top:76px;width:17px;height:16.5px;"></div>
<svg style="left:760px;top:76px" width="17" height="16.5" viewBox="0 0 17 16.5" ><circle cx="7.300" cy="7.300" r="3.700" fill="none" stroke="#e6e6e6" stroke-width="1.200"/><path d="M10 10L13.500 13.500" stroke="#e6e6e6" stroke-width="1.800" stroke-linecap="round"/><path d="M6.500 6.200l1-.7v3.800" stroke="#e6e6e6" stroke-width="0.900" fill="none"/></svg>
<div class="btn" style="left:785.5px;top:76px;width:17px;height:16.5px;"></div>
<svg style="left:785.5px;top:76px" width="17" height="16.5" viewBox="0 0 17 16.5" ><circle cx="7.300" cy="7.300" r="3.700" fill="none" stroke="#e6e6e6" stroke-width="1.200"/><path d="M10 10L13.500 13.500" stroke="#e6e6e6" stroke-width="1.800" stroke-linecap="round"/><path d="M5.300 7.300h4M7.300 5.300v4" stroke="#e6e6e6" stroke-width="1.100"/></svg>
<div class="btn" style="left:806px;top:76px;width:17px;height:16.5px;"></div>
<svg style="left:806px;top:76px" width="17" height="16.5" viewBox="0 0 17 16.5" ><rect x="3.300" y="4.200" width="10.400" height="8.200" fill="none" stroke="#e6e6e6" stroke-width="1"/><path d="M4.800 5.700h2.200l-2.200 2.200zM12.200 5.700h-2.200l2.200 2.200zM4.800 10.900h2.200l-2.200-2.200zM12.200 10.900h-2.200l2.200-2.200z" fill="#e6e6e6"/></svg>
<div class="btn" style="left:826px;top:76px;width:17px;height:16.5px;"></div>
<svg style="left:826px;top:76px" width="17" height="16.5" viewBox="0 0 17 16.5" ><circle cx="7.300" cy="7.300" r="3.700" fill="none" stroke="#e6e6e6" stroke-width="1.200"/><path d="M10 10L13.500 13.500" stroke="#e6e6e6" stroke-width="1.800" stroke-linecap="round"/><path d="M5.300 7.300h4" stroke="#e6e6e6" stroke-width="1.100"/></svg>
<div class="btn" style="left:851.5px;top:76px;width:17px;height:16.5px;"></div>
<svg style="left:851.5px;top:76px" width="17" height="16.5" viewBox="0 0 17 16.5" ><path d="M8.500 3.300A5 5 0 1 1 3.700 7" fill="none" stroke="#e6e6e6" stroke-width="1.200"/><path d="M9 1.500L6 3.400L9 5.300z" fill="#e6e6e6"/><rect x="6" y="6" width="5.300" height="4.300" transform="rotate(20 8.600 8.200)" fill="#e6e6e6"/></svg>
<div class="btn" style="left:872px;top:76px;width:17px;height:16.5px;background:#1e1e1e;border:1px solid #444;"></div>
<svg style="left:872px;top:76px" width="17" height="16.5" viewBox="0 0 17 16.5" ><rect x="5" y="4.800" width="7" height="7" fill="#f4f4f4"/><path d="M3.300 3.200l2 2M13.700 3.200l-2 2M3.300 13.300l2-2M13.700 13.300l-2-2" stroke="#f4f4f4" stroke-width="1.200"/><path d="M2.800 2.700h2.200l-2.200 2.200zM14.200 2.700h-2.200l2.200 2.200zM2.800 13.800h2.200l-2.200-2.200zM14.200 13.800h-2.200l2.200-2.200z" fill="#f4f4f4"/></svg>
<div class="btn" style="left:892px;top:76px;width:17px;height:16.5px;"></div>
<svg style="left:892px;top:76px" width="17" height="16.5" viewBox="0 0 17 16.5" ><path d="M8.500 3.300A5 5 0 1 0 13.300 7" fill="none" stroke="#e6e6e6" stroke-width="1.200"/><path d="M8 1.500L11 3.400L8 5.300z" fill="#e6e6e6"/><rect x="5.700" y="6" width="5.300" height="4.300" transform="rotate(-20 8.400 8.200)" fill="#e6e6e6"/></svg>
<div class="btn" style="left:917px;top:76px;width:17px;height:16.5px;"></div>
<svg style="left:917px;top:76px" width="17" height="16.5" viewBox="0 0 17 16.5" ><rect x="3.500" y="6.500" width="4.300" height="6.500" fill="#e6e6e6"/><rect x="10" y="6.500" width="3.800" height="6.500" fill="none" stroke="#e6e6e6" stroke-width="0.900"/><path d="M8.800 3.500v10.500" stroke="#e6e6e6" stroke-width="0.700"/><path d="M5 5.500C6 3.500 10.500 3 12 5.200" fill="none" stroke="#e6e6e6" stroke-width="0.800"/></svg>
<div class="a" style="left:781px;top:80px;width:1px;height:9px;background:#666"></div>
<div class="a" style="left:847px;top:80px;width:1px;height:9px;background:#666"></div>
<div class="a" style="left:913.5px;top:80px;width:1px;height:9px;background:#666"></div>
<div class="a" style="left:759px;top:102px;width:241px;height:7.5px;background:#444;border-radius:4px"></div>
<div class="a" style="left:874px;top:100px;width:11px;height:11px;background:#8c8c8c;border-radius:50%"></div>
<div class="t" style="left:1006.800px;top:102.200px;font-size:8.500px;letter-spacing:-0.3px;color:#ddd">0 độ</div>
<div class="a" style="left:757.5px;top:115px;width:266.5px;height:54.5px;background:#464544"></div>
<div class="a" style="left:863.800px;top:115.600px;width:54.500px;height:53.700px;background:#fff"></div>
<svg style="left:863.800px;top:115.600px" width="54.500" height="53.700" viewBox="0 0 54.500 53.700"><path d="M8 20c-1-3 1-6 4-5c2-3 6-2 6 1c3-1 5 2 3 4M21 19c2-4 8-5 11-1c2 2 2 5 0 7M32 18c1-4 5-5 8-2c2 2 1 5-1 6M9 21c-2 3-1 7 2 8c-2 3 0 6 3 6M14 35c-1 4 1 8 5 8M12 28c3-2 7 0 7 3c0 3-3 4-5 3M19 31c2-3 6-3 8 0c1 2 0 5-2 6M23 24c-3 1-4 5-1 7M27 25c2 0 4 2 3 4M19 43c1-4 4-8 7-9c3 1 5 5 6 9M22 44l3-7l3 7M32 30c3-2 7-1 8 2c1 3-1 5-3 6M37 26c2-3 6-2 6 1M40 33c2 1 3 4 2 6M35 38c0 3 1 5 3 6M30 44h8M10 44h9M42 36c2 0 3 2 2 4M6 38l2-1M44 22l1-2M16 17l1-3M25 36c1 1 2 1 3 0" fill="none" stroke="#5a5a5a" stroke-width="0.550"/><path d="M33 32l3-3M38 40c1-1 2-1 2 0" fill="none" stroke="#5a90c8" stroke-width="0.500"/></svg>
<div class="a" style="left:902.400px;top:158.400px;width:16px;height:11.200px;border:1.400px solid #d8111b"></div>
<div class="hdr" style="left:757px;top:173px;width:267px;height:15.5px"><div class="ti" style="right:21.7px">Lớp</div><svg style="right:15.899999999999999px;top:3.600px" width="7" height="7" viewBox="0 0 7 7" fill="none" stroke="#ddd" stroke-width="0.9"><path d="M4 1.600H.5v4.900h4.900v-3.300"/><path d="M3.800 3.200l2.700-2.700M4.600 .5h1.900v1.900"/></svg><svg style="right:3.5px;top:3.800px" width="7" height="7" viewBox="0 0 7 7" fill="none" stroke="#cfcfcf" stroke-width="1.700"><path d="M.7 .7l5.600 5.600M6.300 .7L.7 6.300"/></svg></div>
<div class="t" style="left:761.5px;top:196.700px;font-size:8.200px;color:#ddd">Độ trong</div>
<div class="a" style="left:828.5px;top:193.5px;width:155.5px;height:12px;background:linear-gradient(to right,#6cb6f2,#4a94d0)"></div>
<div class="t" style="left:989.5px;top:196.700px;font-size:8.300px;color:#ddd">100 %</div>
<div class="t" style="left:761px;top:215.700px;font-size:8.200px;color:#ddd">Pha trộn</div>
<div class="a" style="left:830px;top:211px;width:188.5px;height:15px;background:#454545;border-radius:2px"></div>
<div class="t" style="left:831.5px;top:215.700px;font-size:8.100px;color:#ddd">Bình thường</div>
<div class="a" style="left:1010.5px;top:217.5px;border:2.5px solid transparent;border-top:3px solid #aaa;border-bottom:0"></div>
<div class="a" style="left:764.5px;top:233.800px;width:8.500px;height:8.500px;border:1px solid #484848"></div>
<div class="t" style="left:776.0px;top:234.900px;font-size:8.100px;color:#5c5c5c">Bảo vệ alpha</div>
<div class="a" style="left:851.5px;top:233.800px;width:8.500px;height:8.500px;border:1px solid #ddd"></div>
<div class="t" style="left:864.0px;top:234.900px;font-size:8.100px;color:#ddd">Xén bớt</div>
<div class="a" style="left:938px;top:233.800px;width:8.500px;height:8.500px;border:1px solid #ddd"></div>
<div class="t" style="left:950.5px;top:234.900px;font-size:8.100px;color:#ddd">Khóa</div>
<div class="a" style="left:759px;top:249px;width:248.5px;height:183.5px;background:#464544"></div>
<div class="a" style="left:759px;top:249.0px;width:248.5px;height:29.8px;background:#5a5a5a;border-bottom:1px solid #383838"></div>
<div class="a" style="left:773.5px;top:249.0px;width:234px;height:28.8px;background:#4f9bd9"></div>
<div class="a" style="left:762.3px;top:260.2px;width:7px;height:7px;border-radius:50%;background:#d0d0d0"></div>
<div class="t" style="left:823.5px;top:260.2px;font-size:10px;color:#f4f4f4;font-weight:bold;letter-spacing:0.2px;margin-top:-0.5px;">#Hd247</div>
<div class="a" style="left:759px;top:278.7px;width:248.5px;height:29.8px;background:#5a5a5a;border-bottom:1px solid #383838"></div>
<div class="a" style="left:762.3px;top:289.9px;width:7px;height:7px;border-radius:50%;background:#d0d0d0"></div>
<div class="t" style="left:823.5px;top:289.9px;font-size:9px;color:#f4f4f4;">@BabeSunz57</div>
<div class="a" style="left:759px;top:308.4px;width:248.5px;height:29.8px;background:#5a5a5a;border-bottom:1px solid #383838"></div>
<div class="a" style="left:762.3px;top:319.6px;width:7px;height:7px;border-radius:50%;background:#d0d0d0"></div>
<div class="t" style="left:823.5px;top:319.6px;font-size:9px;color:#f4f4f4;">Lớp2</div>
<div class="a" style="left:759px;top:338.1px;width:248.5px;height:29.8px;background:#5a5a5a;border-bottom:1px solid #383838"></div>
<div class="a" style="left:762.3px;top:349.3px;width:7px;height:7px;border-radius:50%;background:#d0d0d0"></div>
<div class="t" style="left:823.5px;top:349.3px;font-size:9px;color:#f4f4f4;">Lớp1</div>
<svg style="left:989px;top:254.8px" width="18" height="18" viewBox="0 0 18 18" ><circle cx="9" cy="9" r="4.30" fill="#fff"/><rect x="7.88" y="3.07" width="2.24" height="3.01" fill="#fff" transform="rotate(0 9 9)"/><rect x="7.88" y="3.07" width="2.24" height="3.01" fill="#fff" transform="rotate(45 9 9)"/><rect x="7.88" y="3.07" width="2.24" height="3.01" fill="#fff" transform="rotate(90 9 9)"/><rect x="7.88" y="3.07" width="2.24" height="3.01" fill="#fff" transform="rotate(135 9 9)"/><rect x="7.88" y="3.07" width="2.24" height="3.01" fill="#fff" transform="rotate(180 9 9)"/><rect x="7.88" y="3.07" width="2.24" height="3.01" fill="#fff" transform="rotate(225 9 9)"/><rect x="7.88" y="3.07" width="2.24" height="3.01" fill="#fff" transform="rotate(270 9 9)"/><rect x="7.88" y="3.07" width="2.24" height="3.01" fill="#fff" transform="rotate(315 9 9)"/><circle cx="9" cy="9" r="1.12" fill="#4f9bd9"/></svg>
<div class="a" style="left:784.500px;top:260.700px;width:26.500px;height:5.600px;background:#fff"></div>
<div class="t" style="left:784.500px;top:260.900px;width:26.500px;text-align:center;font-size:5px;font-weight:bold;color:#000;letter-spacing:0.300px">#Hd247</div>
<div class="t" style="left:784.500px;top:291.500px;width:26.500px;text-align:center;font-size:3.600px;font-weight:bold;color:#e8e8e8;letter-spacing:0.100px">@BabeSunz57</div>
<div class="a" style="left:784.500px;top:310.500px;width:26px;height:25.500px;background-color:#fff;background-image:linear-gradient(45deg,#dcdcdc 25%,transparent 25%,transparent 75%,#dcdcdc 75%),linear-gradient(45deg,#dcdcdc 25%,transparent 25%,transparent 75%,#dcdcdc 75%);background-size:4px 4px;background-position:0 0,2px 2px"></div>
<svg style="left:784.500px;top:310.500px" width="26" height="25.500" viewBox="0 0 54.500 53.700"><path d="M8 20c-1-3 1-6 4-5c2-3 6-2 6 1c3-1 5 2 3 4M21 19c2-4 8-5 11-1c2 2 2 5 0 7M32 18c1-4 5-5 8-2c2 2 1 5-1 6M9 21c-2 3-1 7 2 8c-2 3 0 6 3 6M14 35c-1 4 1 8 5 8M12 28c3-2 7 0 7 3c0 3-3 4-5 3M19 31c2-3 6-3 8 0c1 2 0 5-2 6M23 24c-3 1-4 5-1 7M27 25c2 0 4 2 3 4M19 43c1-4 4-8 7-9c3 1 5 5 6 9M22 44l3-7l3 7M32 30c3-2 7-1 8 2c1 3-1 5-3 6M37 26c2-3 6-2 6 1M40 33c2 1 3 4 2 6M35 38c0 3 1 5 3 6M30 44h8M10 44h9M42 36c2 0 3 2 2 4M6 38l2-1M44 22l1-2M16 17l1-3M25 36c1 1 2 1 3 0" fill="none" stroke="#777" stroke-width="0.9"/><path d="M33 32l3-3M38 40c1-1 2-1 2 0" fill="none" stroke="#5a90c8" stroke-width="0.9"/></svg>
<div class="a" style="left:784.5px;top:340.5px;width:26px;height:25.5px;background:#fff"></div>
<div class="a" style="left:1008px;top:249px;width:14px;height:183.5px;background:#3a3a3a"></div>
<div class="a" style="left:1009px;top:257.5px;width:12.5px;height:165px;background:#6a6a6a;border-radius:5px"></div>
<div class="a" style="left:1011.5px;top:250.5px;border:3.5px solid transparent;border-bottom:5px solid #aaa;border-top:0"></div>
<div class="a" style="left:1011.5px;top:425.5px;border:3.5px solid transparent;border-top:5px solid #aaa;border-bottom:0"></div>
<div class="btn" style="left:761.5px;top:435.5px;width:17px;height:16px;"></div>
<svg style="left:761.5px;top:435.5px" width="17" height="16" viewBox="0 0 17 16" ><path d="M4.5 3.200h5.500l2.500 2.500v7.800h-8z" fill="none" stroke="#e6e6e6" stroke-width="1.100"/><path d="M10.0 3.200v2.500h2.500" fill="none" stroke="#e6e6e6" stroke-width="0.800"/></svg>
<div class="btn" style="left:782px;top:435.5px;width:17px;height:16px;"></div>
<svg style="left:782px;top:435.5px" width="17" height="16" viewBox="0 0 17 16" ><path d="M4.5 3.200h5.500l2.500 2.500v7.800h-8z" fill="none" stroke="#e6e6e6" stroke-width="1.100"/><path d="M10.0 3.200v2.500h2.500" fill="none" stroke="#e6e6e6" stroke-width="0.800"/><text x="8.500" y="11.800" font-size="6.500" font-family="Liberation Sans, sans-serif" fill="#e6e6e6" text-anchor="middle">8</text></svg>
<div class="btn" style="left:802.5px;top:435.5px;width:17px;height:16px;"></div>
<svg style="left:802.5px;top:435.5px" width="17" height="16" viewBox="0 0 17 16" ><path d="M4.5 3.200h5.500l2.500 2.500v7.800h-8z" fill="none" stroke="#e6e6e6" stroke-width="1.100"/><path d="M10.0 3.200v2.500h2.500" fill="none" stroke="#e6e6e6" stroke-width="0.800"/><text x="8.500" y="11.800" font-size="6.500" font-family="Liberation Sans, sans-serif" fill="#e6e6e6" text-anchor="middle">1</text></svg>
<div class="btn" style="left:822.5px;top:435.5px;width:22.5px;height:16px;"></div>
<svg style="left:822.5px;top:435.5px" width="22.5" height="16" viewBox="0 0 22.5 16" ><path d="M4 3.200h5l2.300 2.300v3.500M7 12.500h-3z" fill="none" stroke="#e6e6e6" stroke-width="1"/><path d="M4 3.200v9.300h3.500" fill="none" stroke="#e6e6e6" stroke-width="1"/><path d="M10.300 9v5.500M7.500 11.800h5.600" stroke="#e6e6e6" stroke-width="1.600"/><path d="M15.500 7l2.300 2.600l2.300-2.600z" fill="#e6e6e6"/></svg>
<div class="btn" style="left:847.5px;top:435.5px;width:17px;height:16px;"></div>
<svg style="left:847.5px;top:435.5px" width="17" height="16" viewBox="0 0 17 16" ><path d="M3 4.200h4.200l1.200 1.500h5.600v7.300h-11z" fill="#e6e6e6"/><path d="M3 6.600h11" stroke="#555" stroke-width="0.500"/></svg>
<div class="btn" style="left:873px;top:435.5px;width:17.5px;height:16px;"></div>
<svg style="left:873px;top:435.5px" width="17.5" height="16" viewBox="0 0 17.5 16" ><rect x="6.500" y="3.700" width="7.200" height="7.200" fill="none" stroke="#e6e6e6" stroke-width="1"/><rect x="4" y="6" width="7.200" height="7.200" fill="#454545" stroke="#e6e6e6" stroke-width="1"/></svg>
<div class="btn" style="left:893.5px;top:435.5px;width:17px;height:16px;background:#1e1e1e;border:1px solid #444;"></div>
<svg style="left:893.5px;top:435.5px" width="17" height="16" viewBox="0 0 17 16" ><rect x="3.200" y="3" width="3.800" height="3.300" fill="none" stroke="#fff" stroke-width="0.900"/><rect x="3.200" y="10" width="3.800" height="3.300" fill="none" stroke="#fff" stroke-width="0.900"/><rect x="9.800" y="6" width="4.500" height="4" fill="#fff"/><path d="M5 6.300v3.700M5 8.200h3.500" stroke="#fff" stroke-width="0.900" fill="none"/><path d="M8 6.600l2 1.600-2 1.600z" fill="#fff"/></svg>
<div class="btn" style="left:919px;top:435.5px;width:17px;height:16px;"></div>
<svg style="left:919px;top:435.5px" width="17" height="16" viewBox="0 0 17 16" ><path d="M4.300 5.500h8.400l-.7 8h-7z" fill="none" stroke="#e6e6e6" stroke-width="1.100"/><path d="M3.500 5h10" stroke="#e6e6e6" stroke-width="1.300"/><path d="M6.800 4.500v-1.300h3.400v1.300" fill="none" stroke="#e6e6e6" stroke-width="0.900"/><path d="M6.700 7v5M8.500 7v5M10.300 7v5" stroke="#e6e6e6" stroke-width="1"/></svg>
<div class="a" style="left:869px;top:439px;width:1px;height:9px;background:#666"></div>
<div class="a" style="left:914.5px;top:439px;width:1px;height:9px;background:#666"></div>
<div class="hdr" style="left:757px;top:459.5px;width:267px;height:15.5px"><div class="ti" style="right:21.7px">Brush Size</div><svg style="right:15.899999999999999px;top:3.600px" width="7" height="7" viewBox="0 0 7 7" fill="none" stroke="#ddd" stroke-width="0.9"><path d="M4 1.600H.5v4.900h4.900v-3.300"/><path d="M3.800 3.200l2.700-2.700M4.600 .5h1.900v1.900"/></svg><svg style="right:3.5px;top:3.800px" width="7" height="7" viewBox="0 0 7 7" fill="none" stroke="#cfcfcf" stroke-width="1.700"><path d="M.7 .7l5.600 5.600M6.300 .7L.7 6.300"/></svg></div>
<div class="a" style="left:757px;top:476px;width:267px;height:54.500px;background:#464544"></div><div class="a" style="left:757px;top:476px;width:240.200px;height:54.500px;background:#505050"></div>
<div class="a" style="left:757.3px;top:476px;width:29.6px;height:17.2px;background:#5c5c5c;overflow:hidden"><div class="a" style="left:14.8px;top:0.6px;width:0.0px;height:0.0px;border-radius:50%;background:#eee"></div></div>
<div class="t" style="left:757.3px;top:485.5px;width:29.6px;text-align:center;font-size:7px;color:#eee">12</div>
<div class="a" style="left:757.3px;top:493.8px;width:29.6px;height:36.7px;background:#5c5c5c"></div>
<div class="a" style="left:762.9px;top:499.4px;width:18.4px;height:18.4px;border-radius:50%;background:#eee"></div>
<div class="t" style="left:757.3px;top:523px;width:29.6px;text-align:center;font-size:7px;color:#eee">100</div>
<div class="a" style="left:787.3px;top:476px;width:29.6px;height:17.2px;background:#5c5c5c;overflow:hidden"><div class="a" style="left:12.3px;top:-4.4px;width:5.0px;height:5.0px;border-radius:50%;background:#eee"></div></div>
<div class="t" style="left:787.3px;top:485.5px;width:29.6px;text-align:center;font-size:7px;color:#eee">15</div>
<div class="a" style="left:787.3px;top:493.8px;width:29.6px;height:36.7px;background:#5c5c5c"></div>
<div class="a" style="left:792.9px;top:499.4px;width:18.4px;height:18.4px;border-radius:50%;background:#eee"></div>
<div class="t" style="left:787.3px;top:523px;width:29.6px;text-align:center;font-size:7px;color:#eee">150</div>
<div class="a" style="left:817.4px;top:476px;width:29.6px;height:17.2px;background:#5c5c5c;overflow:hidden"><div class="a" style="left:9.3px;top:-8.7px;width:11.0px;height:11.0px;border-radius:50%;background:#eee"></div></div>
<div class="t" style="left:817.4px;top:485.5px;width:29.6px;text-align:center;font-size:7px;color:#eee">20</div>
<div class="a" style="left:817.4px;top:493.8px;width:29.6px;height:36.7px;background:#5c5c5c"></div>
<div class="a" style="left:823.0px;top:499.4px;width:18.4px;height:18.4px;border-radius:50%;background:#eee"></div>
<div class="t" style="left:817.4px;top:523px;width:29.6px;text-align:center;font-size:7px;color:#eee">200</div>
<div class="a" style="left:847.4px;top:476px;width:29.6px;height:17.2px;background:#5c5c5c;overflow:hidden"><div class="a" style="left:8.3px;top:-10.7px;width:13.0px;height:13.0px;border-radius:50%;background:#eee"></div></div>
<div class="t" style="left:847.4px;top:485.5px;width:29.6px;text-align:center;font-size:7px;color:#eee">25</div>
<div class="a" style="left:847.4px;top:493.8px;width:29.6px;height:36.7px;background:#5c5c5c"></div>
<div class="a" style="left:853.0px;top:499.4px;width:18.4px;height:18.4px;border-radius:50%;background:#eee"></div>
<div class="t" style="left:847.4px;top:523px;width:29.6px;text-align:center;font-size:7px;color:#eee">300</div>
<div class="a" style="left:877.5px;top:476px;width:29.6px;height:17.2px;background:#5c5c5c;overflow:hidden"><div class="a" style="left:7.3px;top:-12.7px;width:15.0px;height:15.0px;border-radius:50%;background:#eee"></div></div>
<div class="t" style="left:877.5px;top:485.5px;width:29.6px;text-align:center;font-size:7px;color:#eee">30</div>
<div class="a" style="left:877.5px;top:493.8px;width:29.6px;height:36.7px;background:#5c5c5c"></div>
<div class="a" style="left:883.1px;top:499.4px;width:18.4px;height:18.4px;border-radius:50%;background:#eee"></div>
<div class="t" style="left:877.5px;top:523px;width:29.6px;text-align:center;font-size:7px;color:#eee">400</div>
<div class="a" style="left:907.5px;top:476px;width:29.6px;height:17.2px;background:#5c5c5c;overflow:hidden"><div class="a" style="left:6.3px;top:-14.7px;width:17.0px;height:17.0px;border-radius:50%;background:#eee"></div></div>
<div class="t" style="left:907.5px;top:485.5px;width:29.6px;text-align:center;font-size:7px;color:#eee">40</div>
<div class="a" style="left:907.5px;top:493.8px;width:29.6px;height:36.7px;background:#5c5c5c"></div>
<div class="a" style="left:913.1px;top:499.4px;width:18.4px;height:18.4px;border-radius:50%;background:#eee"></div>
<div class="t" style="left:907.5px;top:523px;width:29.6px;text-align:center;font-size:7px;color:#eee">500</div>
<div class="a" style="left:937.6px;top:476px;width:29.6px;height:17.2px;background:#5c5c5c;overflow:hidden"><div class="a" style="left:5.8px;top:-15.7px;width:18.0px;height:18.0px;border-radius:50%;background:#eee"></div></div>
<div class="t" style="left:937.6px;top:485.5px;width:29.6px;text-align:center;font-size:7px;color:#eee">50</div>
<div class="a" style="left:937.6px;top:493.8px;width:29.6px;height:36.7px;background:#5c5c5c"></div>
<div class="a" style="left:943.2px;top:499.4px;width:18.4px;height:18.4px;border-radius:50%;background:#eee"></div>
<div class="t" style="left:937.6px;top:523px;width:29.6px;text-align:center;font-size:7px;color:#eee">700</div>
<div class="a" style="left:967.6px;top:476px;width:29.6px;height:17.2px;background:#5c5c5c;overflow:hidden"><div class="a" style="left:5.6px;top:-16.1px;width:18.4px;height:18.4px;border-radius:50%;background:#eee"></div></div>
<div class="t" style="left:967.6px;top:485.5px;width:29.6px;text-align:center;font-size:7px;color:#eee">70</div>
<div class="a" style="left:967.6px;top:493.8px;width:29.6px;height:36.7px;background:#5c5c5c"></div>
<div class="a" style="left:973.2px;top:499.4px;width:18.4px;height:18.4px;border-radius:50%;background:#eee"></div>
<div class="t" style="left:967.6px;top:523px;width:29.6px;text-align:center;font-size:7px;color:#eee">1000</div>
<div class="a" style="left:1009.5px;top:476px;width:13px;height:54.5px;background:#3a3a3a"></div>
<div class="a" style="left:1010px;top:505px;width:12px;height:16.5px;background:#777;border-radius:4px"></div>
<div class="a" style="left:1012.5px;top:478.5px;border:3.5px solid transparent;border-bottom:5px solid #aaa;border-top:0"></div>
<div class="a" style="left:1012.5px;top:524.5px;border:3.5px solid transparent;border-top:5px solid #aaa;border-bottom:0"></div>
<div class="a" style="left:0;top:530.5px;width:1024px;height:16px;background:#222"></div>
<div class="t" style="left:5px;top:534.5px;font-size:8.350px;color:#d6d6d6;white-space:pre">20000 * 20000 pixel   (145.1 * 145.1cm)   350 dpi   12 %   ( 19532, 15898 )</div>
<div class="a" style="left:0;top:545.8px;width:1024px;height:30.2px;background:linear-gradient(to right,#1f2b38 0%,#1f2b38 45%,#162338 75%,#13203a 100%)"></div>
<div class="a" style="left:368px;top:545.8px;width:36.3px;height:30.2px;background:#4a545f"></div>
<div class="a" style="left:150.4px;top:574.6px;width:30px;height:1.4px;background:#8fc3ea"></div>
<div class="a" style="left:187.2px;top:574.6px;width:30px;height:1.4px;background:#8fc3ea"></div>
<div class="a" style="left:224px;top:574.6px;width:30px;height:1.4px;background:#8fc3ea"></div>
<div class="a" style="left:297.5px;top:574.6px;width:30px;height:1.4px;background:#8fc3ea"></div>
<div class="a" style="left:334.2px;top:574.6px;width:30px;height:1.4px;background:#8fc3ea"></div>
<div class="a" style="left:368px;top:574.6px;width:36.3px;height:1.4px;background:#9ccaf0"></div>
<svg style="left:0;top:0" width="1024" height="576" viewBox="0 0 1024 576"><path d="M11.200 556.400l5.300-.8v5h-5.300zM17.200 555.500l6.800-1v6.100h-6.800zM11.200 561.300h5.300v5l-5.300-.8zM17.200 561.300h6.800v6.100l-6.800-1z" fill="#fff"/><rect x="49.500" y="558" width="7" height="6.500" fill="none" stroke="#fff" stroke-width="1"/><path d="M48.500 555.500h8.500M48.500 566.500h8.500" stroke="#fff" stroke-width="1"/><path d="M59 555.300v2.200M59 559v5M59 565.300v1.800" stroke="#fff" stroke-width="1.100"/><defs><linearGradient id="eg" x1="0" y1="0" x2="1" y2="1"><stop offset="0" stop-color="#35c1e0"/><stop offset="1" stop-color="#1565c0"/></linearGradient><linearGradient id="eg2" x1="0" y1="0" x2="1" y2="0"><stop offset="0" stop-color="#2f9fe0"/><stop offset="1" stop-color="#5ad06a"/></linearGradient></defs><circle cx="92.300" cy="560.800" r="9.300" fill="url(#eg)"/><path d="M83.500 558C85 553 90 551 94.500 551.800C99 552.800 101.800 556.500 101.600 560.500C101 563.500 98 564.500 95.500 563.500C97.500 561 96 557.500 92.500 557C88.500 556.500 85 558.500 83.500 562Z" fill="url(#eg2)"/><path d="M92 559.500C89.500 560.500 89.500 564.500 92.500 566C95 567 98.500 566.500 100 564.500C97 565.500 94 564 94.500 561.500C94.500 560 93.500 559.300 92 559.500Z" fill="#1f2b38"/><circle cx="128.500" cy="561" r="8.300" fill="#7cc142"/><circle cx="128.500" cy="561" r="8.300" fill="none" stroke="#5aa02c" stroke-width="0.800"/><circle cx="127.500" cy="562" r="4.200" fill="none" stroke="#fff" stroke-width="1.600"/><circle cx="127.500" cy="562" r="1.500" fill="#fff"/><path d="M130 556.500l4.500-3M131.500 558.300l5-1.500M132 560.500l4.500.3" stroke="#f2efe0" stroke-width="1.200"/><path d="M131 555l3-2.500" stroke="#d94a3a" stroke-width="1"/><path d="M157.500 554h6l1.500 1.800h9v3h-16.500z" fill="#e8a92a"/><rect x="157.500" y="556.800" width="16.500" height="10.300" fill="#f8cf4e"/><rect x="161" y="561.500" width="9.500" height="5.600" fill="#3c8fd6"/><rect x="163.300" y="564" width="5" height="3.100" fill="#f8cf4e"/><ellipse cx="200.500" cy="562.500" rx="7.800" ry="6.300" transform="rotate(-15 200.500 562.500)" fill="#dfe6ee"/><circle cx="196.500" cy="561" r="1.400" fill="#e0453a"/><circle cx="199.500" cy="558.800" r="1.400" fill="#f0c030"/><circle cx="203.500" cy="559" r="1.400" fill="#3a8ee0"/><circle cx="197.800" cy="565" r="1.400" fill="#3aa850"/><circle cx="203" cy="565.500" r="1.700" fill="#1f2b38"/><path d="M209.500 553L203.500 566" stroke="#c98a4a" stroke-width="1.700" stroke-linecap="round"/><path d="M209.800 552.300l-1.500 3.500" stroke="#f0e8d8" stroke-width="1.900" stroke-linecap="round"/><rect x="230" y="552" width="18.300" height="16" rx="4.500" fill="#fff"/><path d="M232 566l-.5 3 3.500-2z" fill="#fff"/><text x="239.200" y="562.700" font-size="7" font-weight="bold" font-family="Liberation Sans, sans-serif" fill="#1a6de0" text-anchor="middle" letter-spacing="-0.300">Zalo</text><path d="M275.6 560.8L267.98 556.40A8.8 8.8 0 0 1 283.22 556.40Z" fill="#e3402f"/><path d="M275.6 560.8L283.22 556.40A8.8 8.8 0 0 1 275.60 569.60Z" fill="#f6c32c"/><path d="M275.6 560.8L275.60 569.60A8.8 8.8 0 0 1 267.98 556.40Z" fill="#2f9e4f"/><circle cx="275.6" cy="560.8" r="4.14" fill="#f4f4f4"/><circle cx="275.6" cy="560.8" r="3.17" fill="#4a8af0"/><path d="M312 560.8L304.38 556.40A8.8 8.8 0 0 1 319.62 556.40Z" fill="#e3402f"/><path d="M312 560.8L319.62 556.40A8.8 8.8 0 0 1 312.00 569.60Z" fill="#f6c32c"/><path d="M312 560.8L312.00 569.60A8.8 8.8 0 0 1 304.38 556.40Z" fill="#2f9e4f"/><circle cx="312" cy="560.8" r="4.14" fill="#f4f4f4"/><circle cx="312" cy="560.8" r="3.17" fill="#4a8af0"/><circle cx="350.500" cy="559" r="7.500" fill="#c0302a"/><path d="M345 555.500A6 6 0 0 0 346 565" stroke="#1f2b38" stroke-width="1.500" fill="none"/><path d="M351 552.500L349.500 563M353 553.500L350.500 563" stroke="#f0f0f0" stroke-width="1.400"/><circle cx="347.300" cy="566" r="2.200" fill="none" stroke="#2a7dd8" stroke-width="1.400"/><circle cx="352.500" cy="567" r="2.200" fill="none" stroke="#2a7dd8" stroke-width="1.400"/><defs><linearGradient id="mb" x1="0" y1="0" x2="1" y2="1"><stop offset="0" stop-color="#f07a30"/><stop offset="0.450" stop-color="#e8505a"/><stop offset="0.600" stop-color="#38b890"/><stop offset="1" stop-color="#38b0d0"/></linearGradient></defs><rect x="376.800" y="552" width="18" height="17.500" rx="3" fill="#f6f6f4"/><path d="M388 555.500C391 557.500 392 561 390.500 563.800C389 566.500 385 567.200 382.800 565.500C380.300 563.500 380.800 560 383 558C384.800 556.500 386.500 556 388 555.500Z" fill="url(#mb)"/><path d="M699.500 565.500C696 565.500 695.500 561.500 698.800 560.800C698.800 557 703.500 555.300 706 558C709 556.800 711.300 559.300 710.500 561.500C712.500 562.300 712 565.500 709.500 565.500Z" fill="#dfe8f2"/><path d="M700 565.500C698 565.500 697.500 563 699.500 562.500C700 560.500 703 560 704.500 561.800C706.500 561 708 562.500 707.500 564C708.500 564.300 708.500 565.500 707.500 565.500Z" fill="#9fb8d8"/><path d="M801 563l3.800-3.800l3.800 3.800" fill="none" stroke="#fff" stroke-width="1"/><rect x="818.200" y="557.500" width="10.500" height="6.500" fill="none" stroke="#fff" stroke-width="1"/><rect x="829" y="559.500" width="1.300" height="2.500" fill="#fff"/><rect x="819.700" y="559" width="5" height="3.500" fill="#fff"/><circle cx="826.500" cy="564.500" r="2.600" fill="#2fa84a"/><path d="M826.500 563v3M825.300 564.200l1.200-1.300l1.200 1.300" stroke="#fff" stroke-width="0.600" fill="none"/><rect x="836" y="554.500" width="12" height="12" fill="#f4d6d6"/><path d="M838.500 557l3.500 7.500l3.500-7.500" fill="none" stroke="#d02020" stroke-width="1.600"/><path d="M855.500 566A8 8 0 0 1 863.500 558" fill="none" stroke="#8c98a4" stroke-width="1"/><path d="M857.500 566A6 6 0 0 1 863.500 560" fill="none" stroke="#fff" stroke-width="1"/><path d="M859.500 566A4 4 0 0 1 863.500 562" fill="none" stroke="#fff" stroke-width="1"/><circle cx="862.700" cy="565.300" r="1" fill="#fff"/><path d="M872.300 559.300h2l2.700-2.500v8.400l-2.700-2.500h-2z" fill="none" stroke="#fff" stroke-width="0.900"/><path d="M878.500 558.800a3 3 0 0 1 0 4.400M880.200 557.300a5 5 0 0 1 0 7.400" fill="none" stroke="#fff" stroke-width="0.800"/><path d="M881.800 556a7 7 0 0 1 0 10" fill="none" stroke="#8c98a4" stroke-width="0.800"/><path d="M895.300 555c2 1 3.500 1.300 5 1.300c0 5-1.500 8.500-5 10.200c-3.500-1.700-5-5.200-5-10.200c1.500 0 3-.3 5-1.300z" fill="#fff"/><path d="M895.300 555v11.500M890.300 561h10" stroke="#1a2636" stroke-width="0.900"/><circle cx="899.200" cy="565.300" r="2.700" fill="#2fa84a"/><path d="M897.900 565.300l1 1l1.700-1.900" stroke="#fff" stroke-width="0.700" fill="none"/><path d="M993.500 555.500h12v9h-4.500l-1.500 2l-1.500-2h-4.500z" fill="#fff"/><path d="M995.500 558h8M995.500 560h8M995.500 562h5" stroke="#1a2636" stroke-width="0.700"/></svg>
<div class="t" style="left:718.5px;top:557px;font-size:10px;color:#fff">29°C</div>
<div class="t" style="left:748px;top:557px;font-size:10px;letter-spacing:0.2px;color:#fff">Mưa nhỏ</div>
<div class="a" style="left:1019.500px;top:549px;width:1px;height:27px;background:#56606c"></div>
<div class="t" style="left:912.3px;top:557.5px;font-size:8px;color:#fff;letter-spacing:-0.3px">VIE</div>
<div class="t" style="left:931px;top:548.8px;width:54px;text-align:center;font-size:8.800px;letter-spacing:-0.300px;color:#fff">6:28 CH</div>
<div class="t" style="left:931px;top:563.3px;width:54px;text-align:center;font-size:8.8px;color:#fff">02/09/2021</div>
</body></html>
